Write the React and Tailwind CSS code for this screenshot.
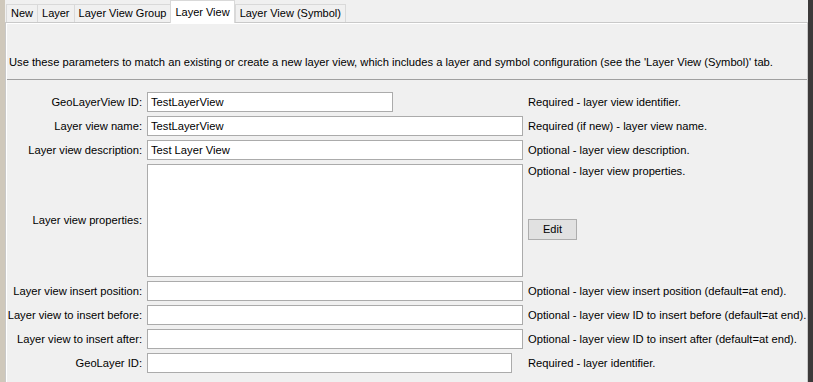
import React from 'react';

const tabs = ['New', 'Layer', 'Layer View Group', 'Layer View', 'Layer View (Symbol)'];
const selectedTab = 'Layer View';

// one text field row: label / input / help text
const Row = ({ label, value = '', inputWidth = 'w-[376px]', help }) => (
  <>
    <div className="flex h-5 items-center justify-end whitespace-nowrap">{label}</div>
    <div className="flex h-5 items-center">
      <div className={`flex h-5 items-center border border-[#ababab] bg-white pl-[3px] ${inputWidth}`}>
        {value}
      </div>
    </div>
    <div className="flex h-5 items-center whitespace-nowrap">{help}</div>
  </>
);

export default function App() {
  return (
    <div
      className="flex h-[382px] w-[813px] overflow-hidden bg-[#f0f0f0] text-[11.2px] text-black"
      style={{ fontFamily: '"Liberation Sans", Arial, sans-serif' }}
    >
      {/* desktop strip behind the window */}
      <div className="w-[5px] shrink-0 bg-[#cfc8bb]" />

      <div className="flex w-[803px] flex-col">
        {/* Tabs */}
        <div className="flex h-[22px] items-end pl-px text-[11px]">
          {tabs.map((t) =>
            t === selectedTab ? (
              <div
                key={t}
                className="relative z-10 -mb-px flex h-[23px] items-start border border-b-0 border-[#d9d9d9] bg-white px-[4px] pt-[3px]"
              >
                {t}
              </div>
            ) : (
              <div
                key={t}
                className="-mr-px flex h-[18px] items-center border-t border-l border-r border-[#d9d9d9] bg-[#f0f0f0] px-[4px]"
              >
                {t}
              </div>
            )
          )}
        </div>

        {/* Tab panel */}
        <div className="flex flex-1 flex-col border-l border-t border-r border-[#c9c9c9]">
          <div className="flex flex-1 flex-col border-l border-t border-white">
            <div className="flex h-[55px] items-end pb-[8px] pl-[2px] whitespace-nowrap">
              Use these parameters to match an existing or create a new layer view, which includes a layer and symbol
              configuration (see the 'Layer View (Symbol)' tab.
            </div>
            <div className="h-px bg-[#a0a0a0]" />

            <div className="grid grid-cols-[135px_376px_1fr] gap-x-[5px] gap-y-[4px] pt-[12px]">
              <Row label="GeoLayerView ID:" value="TestLayerView" inputWidth="w-[246px]" help="Required - layer view identifier." />
              <Row label="Layer view name:" value="TestLayerView" help="Required (if new) - layer view name." />
              <Row label="Layer view description:" value="Test Layer View" help="Optional - layer view description." />

              <div className="flex items-center justify-end whitespace-nowrap">Layer view properties:</div>
              <div className="h-[113px] border border-[#ababab] bg-white" />
              <div className="flex flex-col items-start">
                <div className="flex h-[14px] items-center whitespace-nowrap">Optional - layer view properties.</div>
                <button className="mt-[41px] h-[21px] w-[49px] border border-[#adadad] bg-[#e1e1e1] text-[11px]">
                  Edit
                </button>
              </div>

              <Row label="Layer view insert position:" help="Optional - layer view insert position (default=at end)." />
              <Row label="Layer view to insert before:" help="Optional - layer view ID to insert before (default=at end)." />
              <Row label="Layer view to insert after:" help="Optional - layer view ID to insert after (default=at end)." />
              <Row label="GeoLayer ID:" inputWidth="w-[365px]" help="Required - layer identifier." />
            </div>
          </div>
        </div>
      </div>

      {/* dark strip on the right */}
      <div className="w-[5px] shrink-0 bg-[#3c3a3a]" />
    </div>
  );
}
